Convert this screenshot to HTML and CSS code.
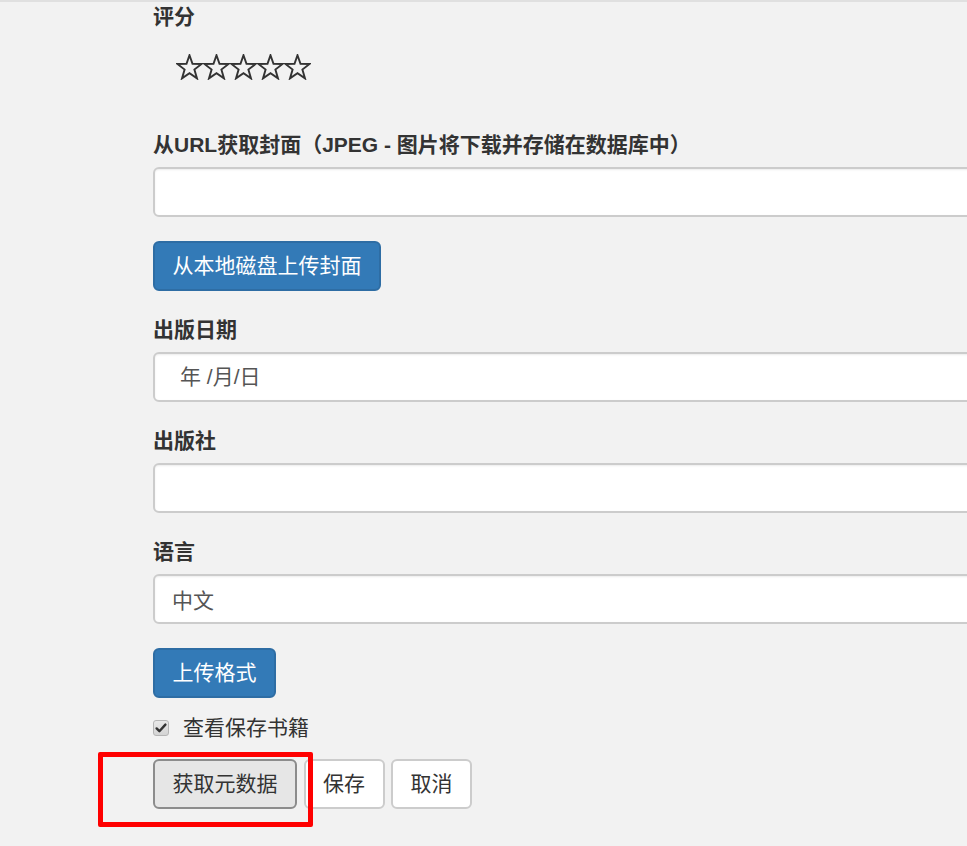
FILE: index.html
```html
<!DOCTYPE html>
<html lang="zh-CN">
<head>
<meta charset="utf-8">
<title>编辑书籍</title>
<link rel="stylesheet" href="styles.css">
</head>
<body>
<div class="page">
  <form class="book-form">
    <div class="group rating-group">
      <label class="field-label">评分</label>
      <div class="stars">
        <svg class="star" viewBox="0 0 27 26" width="27" height="26"><polygon points="13.5,1.2 16.5,9.8 25.6,10 18.4,15.6 21,24.4 13.5,19.2 6,24.4 8.6,15.6 1.4,10 10.5,9.8"/></svg>
        <svg class="star" viewBox="0 0 27 26" width="27" height="26"><polygon points="13.5,1.2 16.5,9.8 25.6,10 18.4,15.6 21,24.4 13.5,19.2 6,24.4 8.6,15.6 1.4,10 10.5,9.8"/></svg>
        <svg class="star" viewBox="0 0 27 26" width="27" height="26"><polygon points="13.5,1.2 16.5,9.8 25.6,10 18.4,15.6 21,24.4 13.5,19.2 6,24.4 8.6,15.6 1.4,10 10.5,9.8"/></svg>
        <svg class="star" viewBox="0 0 27 26" width="27" height="26"><polygon points="13.5,1.2 16.5,9.8 25.6,10 18.4,15.6 21,24.4 13.5,19.2 6,24.4 8.6,15.6 1.4,10 10.5,9.8"/></svg>
        <svg class="star" viewBox="0 0 27 26" width="27" height="26"><polygon points="13.5,1.2 16.5,9.8 25.6,10 18.4,15.6 21,24.4 13.5,19.2 6,24.4 8.6,15.6 1.4,10 10.5,9.8"/></svg>
      </div>
    </div>

    <div class="group">
      <label class="field-label">从URL获取封面（JPEG - 图片将下载并存储在数据库中）</label>
      <input class="form-control" type="text">
    </div>

    <div class="group">
      <button type="button" class="btn btn-primary">从本地磁盘上传封面</button>
    </div>

    <div class="group">
      <label class="field-label">出版日期</label>
      <div class="form-control date-control"><span class="date-text">年 /月/日</span></div>
    </div>

    <div class="group">
      <label class="field-label">出版社</label>
      <input class="form-control" type="text">
    </div>

    <div class="group">
      <label class="field-label">语言</label>
      <input class="form-control" type="text" value="中文">
    </div>

    <div class="group group-tight">
      <button type="button" class="btn btn-primary">上传格式</button>
    </div>

    <div class="checkbox-row">
      <span class="fake-check">
        <svg viewBox="0 0 16 16" width="16" height="16"><path d="M3.6 8.4 L6.4 11.2 L12.4 4.6" fill="none" stroke="#333" stroke-width="2.4" stroke-linecap="round" stroke-linejoin="round"/></svg>
      </span>
      <span class="check-text">查看保存书籍</span>
    </div>

    <div class="actions">
      <button type="button" class="btn btn-default is-active">获取元数据</button>
      <button type="button" class="btn btn-default">保存</button>
      <button type="button" class="btn btn-default">取消</button>
      <span class="highlight-box"></span>
    </div>
  </form>
</div>
</body>
</html>
```

FILE: styles.css
```css
html {
  margin: 0;
  padding: 0;
  overflow: hidden;
  background: #f2f2f2;
}

body {
  margin: 0;
  padding: 0;
  min-height: 846px;
  border-top: 2px solid #e0e0e0;
  font-family: "Liberation Sans", "Noto Sans CJK SC", sans-serif;
  font-size: 21px;
  line-height: 30px;
  color: #333;
}

.page {
  padding-left: 153px;
}

.book-form {
  width: 900px;
  display: flex;
  flex-direction: column;
}

.group {
  display: flex;
  flex-direction: column;
  align-items: flex-start;
  margin-bottom: 24px;
}

.group-tight {
  margin-bottom: 15px;
}

.rating-group {
  margin-bottom: 0;
}

.field-label {
  display: block;
  font-weight: 700;
  height: 30px;
  margin-bottom: 7px;
}

.stars {
  display: flex;
  height: 26px;
  padding-left: 23px;
  margin-top: 15px;
  margin-bottom: 50px;
}

.star polygon {
  fill: none;
  stroke: #333;
  stroke-width: 1.9;
  stroke-linejoin: miter;
}

.form-control {
  box-sizing: border-box;
  width: 100%;
  height: 50px;
  padding: 8px 17px;
  font-family: "Liberation Sans", "Noto Sans CJK SC", sans-serif;
  font-size: 21px;
  line-height: 30px;
  color: #555;
  background: #fff;
  border: 2px solid #cccccc;
  border-radius: 6px;
  box-shadow: inset 0 1px 2px rgba(0, 0, 0, 0.075);
  outline: none;
}

.date-control {
  display: flex;
  align-items: center;
  padding-left: 25px;
}

.date-text {
  color: #555;
}

.btn {
  box-sizing: border-box;
  height: 50px;
  padding: 8px 17.5px;
  font-family: "Liberation Sans", "Noto Sans CJK SC", sans-serif;
  font-size: 21px;
  line-height: 30px;
  border: 2px solid transparent;
  border-radius: 6px;
  cursor: pointer;
  white-space: nowrap;
}

.btn-primary {
  color: #fff;
  background: #337ab7;
  border-color: #2e6da4;
}

.btn-default {
  color: #333;
  background: #fff;
  border-color: #cccccc;
}

.btn-default.is-active {
  background: #e6e6e6;
  border-color: #8c8c8c;
}

.checkbox-row {
  display: flex;
  align-items: center;
  height: 30px;
  margin-bottom: 16px;
}

.fake-check {
  box-sizing: border-box;
  width: 16px;
  height: 16px;
  border: 1px solid #b5b5b5;
  border-radius: 3px;
  background: linear-gradient(#e8e8e8, #d4d4d4);
  display: flex;
  align-items: center;
  justify-content: center;
}

.fake-check svg {
  display: block;
  margin: -1px;
}

.check-text {
  margin-left: 14px;
}

.actions {
  position: relative;
  display: flex;
  gap: 6.5px;
}

.highlight-box {
  position: absolute;
  left: -55px;
  top: -7px;
  width: 215px;
  height: 75px;
  box-sizing: border-box;
  border: 5px solid #ff0000;
  border-radius: 2px;
  pointer-events: none;
}
```
